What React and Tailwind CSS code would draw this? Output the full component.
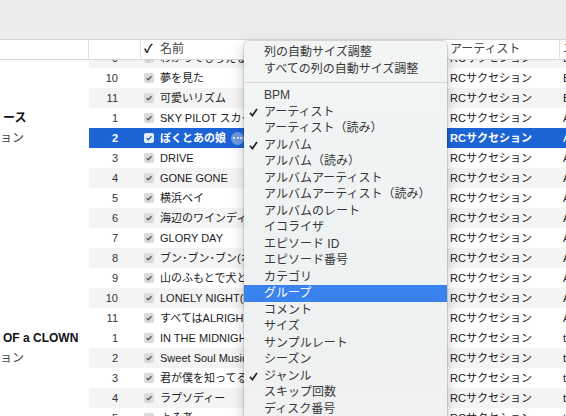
const groups = [
  {
    album: null,
    artistTail: "Baby a Go Go",
    tracks: [
      { n: 9, name: "わかってもらえるさ", shade: true },
      { n: 10, name: "夢を見た", shade: false },
      { n: 11, name: "可愛いリズム", shade: true },
    ],
    offset: -12,
  },
  {
    album: "ース",
    artistTail: "Aの",
    tracks: [
      { n: 1, name: "SKY PILOT スカイ・パイロット", shade: false },
      { n: 2, name: "ぼくとあの娘", shade: false, selected: true },
      { n: 3, name: "DRIVE", shade: false },
      { n: 4, name: "GONE GONE", shade: true },
      { n: 5, name: "横浜ベイ", shade: false },
      { n: 6, name: "海辺のワインディング・ロード", shade: true },
      { n: 7, name: "GLORY DAY", shade: false },
      { n: 8, name: "ブン･ブン･ブン(オー・ベイビー)", shade: true },
      { n: 9, name: "山のふもとで犬と暮らしている", shade: false },
      { n: 10, name: "LONELY NIGHT(NEVER NEVER)", shade: true },
      { n: 11, name: "すべてはALRIGHT(YA BABY)", shade: false },
    ],
  },
  {
    album: "OF a CLOWN",
    artistTail: "the",
    tracks: [
      { n: 1, name: "IN THE MIDNIGHT HOUR", shade: false },
      { n: 2, name: "Sweet Soul Music", shade: true },
      { n: 3, name: "君が僕を知ってる", shade: false },
      { n: 4, name: "ラプソディー", shade: true },
      { n: 5, name: "よそ者", shade: false },
    ],
  },
];

const menuItems = [
  { label: "BPM" },
  { label: "アーティスト", checked: true },
  { label: "アーティスト（読み）" },
  { label: "アルバム", checked: true },
  { label: "アルバム（読み）" },
  { label: "アルバムアーティスト" },
  { label: "アルバムアーティスト（読み）" },
  { label: "アルバムのレート" },
  { label: "イコライザ" },
  { label: "エピソード ID" },
  { label: "エピソード番号" },
  { label: "カテゴリ" },
  { label: "グループ", active: true },
  { label: "コメント" },
  { label: "サイズ" },
  { label: "サンプルレート" },
  { label: "シーズン" },
  { label: "ジャンル", checked: true },
  { label: "スキップ回数" },
  { label: "ディスク番号" },
];

function Checkbox({ selected }) {
  return (
    <svg width="10" height="10" viewBox="0 0 10 10">
      <rect x="0" y="0" width="10" height="10" rx="2" fill={selected ? "#e4ecfa" : "#dcdcdc"} />
      <path d="M2.6 5.2 L4.3 6.8 L7.5 3.3" fill="none" stroke={selected ? "#1c63d5" : "#555"} strokeWidth="1.3" />
    </svg>
  );
}

function TrackRow({ t, tail }) {
  const bg = t.selected
    ? "bg-[#1c63d5] text-white font-bold"
    : t.shade
    ? "bg-[#f4f4f4] text-[#222]"
    : "bg-white text-[#222]";
  return (
    <div className={`flex h-[20px] items-center whitespace-nowrap overflow-hidden leading-[20px] ${bg}`}>
      <div className={`w-[52px] shrink-0 text-right pr-[23px] ${t.selected ? "" : "text-[#333]"}`}>{t.n}</div>
      <div className="w-[15px] shrink-0 flex items-center pl-[3px]">
        <Checkbox selected={t.selected} />
      </div>
      <div className="w-[291px] shrink-0 pl-[4px] flex items-center gap-[5px] overflow-hidden">
        <span>{t.name}</span>
        {t.selected && (
          <span className="w-[13px] h-[13px] rounded-full bg-[#6f9be4] flex items-center justify-center gap-[1.5px]">
            <span className="w-[2px] h-[2px] rounded-full bg-white" />
            <span className="w-[2px] h-[2px] rounded-full bg-white" />
            <span className="w-[2px] h-[2px] rounded-full bg-white" />
          </span>
        )}
      </div>
      <div className="w-[113px] shrink-0 pl-[3px] overflow-hidden">RCサクセション</div>
      <div className="flex-1 pl-[3px] overflow-hidden font-normal">{tail}</div>
    </div>
  );
}

export default function App() {
  return (
    <div className="relative w-[566px] h-[416px] overflow-hidden bg-white text-[11px] font-['Liberation_Sans','Noto_Sans_CJK_JP',sans-serif]">
      {/* toolbar strip */}
      <div className="h-[40px] bg-[#ececec] border-b border-[#d6d6d6]" />

      {/* column header */}
      <div className="relative z-10 flex h-[20px] items-center bg-white border-b border-[#d9d9d9] text-[#444] text-[12px] leading-[19px] whitespace-nowrap">
        <div className="w-[89px] h-full border-r border-[#e2e2e2]" />
        <div className="w-[52px] h-full border-r border-[#e2e2e2]" />
        <div className="w-[15px] pl-[3px] text-[#111] font-bold">✓</div>
        <div className="w-[291px] pl-[4px]">名前</div>
        <div className="w-[113px] h-full flex items-center pl-[3px] border-r border-[#e2e2e2]">アーティスト</div>
        <div className="flex-1 pl-[3px] overflow-hidden">ユ</div>
      </div>

      {/* track list */}
      <div className="overflow-hidden h-[356px]">
        {groups.map((g, gi) => (
          <div
            key={gi}
            className={`flex ${gi > 0 ? "shadow-[inset_0_1px_0_#d8d8d8]" : ""} ${g.offset ? "-mt-[12px]" : ""}`}
          >
            <div className="w-[89px] shrink-0 overflow-hidden whitespace-nowrap bg-white">
              {g.album && (
                <>
                  <div className="h-[20px] flex items-center pl-[3px] font-bold text-[12px] text-[#111]">{g.album}</div>
                  <div className="h-[20px] flex items-center text-[12px] text-[#444]">ョン</div>
                </>
              )}
            </div>
            <div className="flex-1 min-w-0">
              {g.tracks.map((t, ti) => (
                <TrackRow key={ti} t={t} tail={g.artistTail} />
              ))}
            </div>
          </div>
        ))}
      </div>

      {/* column chooser menu */}
      <div className="absolute z-20 left-[244px] top-[41px] w-[203px] h-[400px] rounded-t-[5px] bg-gradient-to-b from-[#f3f5f5] via-[#edf2f2] to-[#f1f1f1] shadow-[0_0_0_1px_rgba(0,0,0,0.12),0_5px_14px_rgba(0,0,0,0.22)] text-[12px] leading-[16.5px] text-[#383838] whitespace-nowrap pt-[3px]">
        <div className="h-[16.5px] pl-[20px]">列の自動サイズ調整</div>
        <div className="h-[16.5px] pl-[20px]">すべての列の自動サイズ調整</div>
        <div className="h-[10px] flex items-center">
          <div className="w-full h-px bg-[#d6d6d6]" />
        </div>
        {menuItems.map((m, i) => (
          <div
            key={i}
            className={`relative h-[16.5px] pl-[20px] ${m.active ? "bg-[#3a83ee] text-white" : ""}`}
          >
            {m.checked && (
              <svg width="9" height="9" viewBox="0 0 9 9" className="absolute left-[5px] top-[4px]">
                <path d="M1 4.8 L3.4 7.6 L8 1" fill="none" stroke="#222" strokeWidth="1.7" />
              </svg>
            )}
            {m.label}
          </div>
        ))}
      </div>
    </div>
  );
}
